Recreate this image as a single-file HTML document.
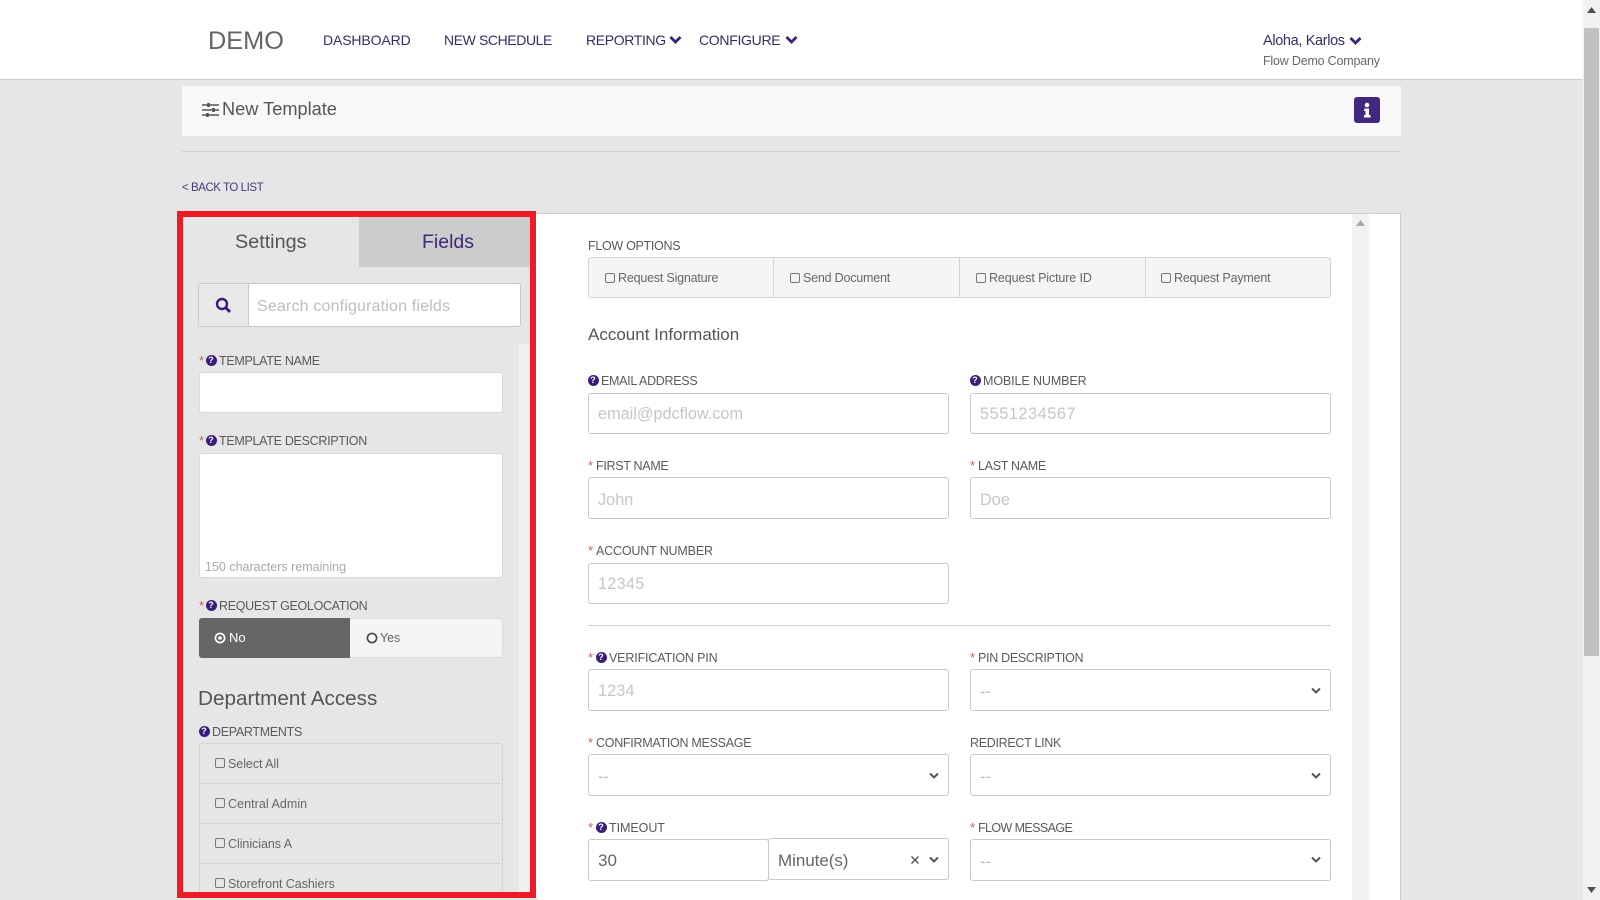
<!DOCTYPE html>
<html lang="en">
<head>
<meta charset="utf-8">
<title>New Template</title>
<style>
*{box-sizing:border-box}
html,body{margin:0;padding:0;width:1600px;height:900px;overflow:hidden;background:#e6e6e6;font-family:"Liberation Sans",sans-serif;color:#555}
.a{position:absolute}
.t{position:absolute;white-space:nowrap;line-height:16px;height:16px}
.lb{font-size:12.5px;letter-spacing:-.3px;color:#5a5a5a}
.nav{font-size:14px;color:#3b2a63}
.r{color:#c9605a;font-size:13px}
.q{position:absolute;width:11px;height:11px;margin-left:-.5px;margin-top:-1px;border-radius:50%;background:#3a1d78;color:#fff;font:bold 9px/11px "Liberation Sans",sans-serif;text-align:center}
.in{position:absolute;background:#fff;border:1px solid #c8c8c8;border-radius:3px}
.ph{position:absolute;white-space:nowrap;font-size:16.3px;line-height:20px;height:20px;color:#c6c6c6}
.cb{position:absolute;width:10px;height:10px;border:1px solid #777;border-radius:2px;background:transparent}
.ct{font-size:12.5px;color:#666;letter-spacing:-.05px}
.fo{letter-spacing:-.2px}
svg{position:absolute;display:block}
</style>
</head>
<body>

<!-- top nav -->
<div class="a" style="left:0;top:0;width:1583px;height:80px;background:#fff;border-bottom:1px solid #ccc"></div>
<div class="t" style="left:208px;top:26px;height:30px;line-height:30px;font-size:25.3px;color:#666">DEMO</div>
<div class="t nav" style="left:323px;top:32px;letter-spacing:-.12px">DASHBOARD</div>
<div class="t nav" style="left:444px;top:32px;letter-spacing:-.4px">NEW SCHEDULE</div>
<div class="t nav" style="left:586px;top:32px;letter-spacing:-.35px">REPORTING</div>
<svg style="left:669px;top:35px" width="13" height="10" viewBox="0 0 13 10"><path d="M1.5 2 L6.5 7 L11.5 2" fill="none" stroke="#3f2375" stroke-width="2.8"/></svg>
<div class="t nav" style="left:699px;top:32px;letter-spacing:-.3px">CONFIGURE</div>
<svg style="left:785px;top:35px" width="13" height="10" viewBox="0 0 13 10"><path d="M1.5 2 L6.5 7 L11.5 2" fill="none" stroke="#3f2375" stroke-width="2.8"/></svg>
<div class="t" style="left:1263px;top:33px;font-size:14.5px;color:#3b2a63;letter-spacing:-.35px">Aloha, Karlos</div>
<svg style="left:1349px;top:36px" width="13" height="10" viewBox="0 0 13 10"><path d="M1.5 2 L6.5 7 L11.5 2" fill="none" stroke="#3f2375" stroke-width="2.8"/></svg>
<div class="t" style="left:1263px;top:53px;font-size:12.5px;letter-spacing:-.2px;color:#666">Flow Demo Company</div>

<!-- page header -->
<div class="a" style="left:182px;top:86px;width:1219px;height:50px;background:#f8f8f8"></div>
<svg style="left:202px;top:102px" width="17" height="16" viewBox="0 0 17 16"><path d="M0 3h17M0 8h17M0 13h17" stroke="#555" stroke-width="1.6"/><rect x="5" y="1" width="3" height="4" rx="1" fill="#555"/><rect x="10" y="6" width="3" height="4" rx="1" fill="#555"/><rect x="4" y="11" width="3" height="4" rx="1" fill="#555"/></svg>
<div class="t" style="left:222px;top:98px;height:22px;line-height:22px;font-size:18.2px;color:#555">New Template</div>
<div class="a" style="left:1354px;top:97px;width:26px;height:26px;background:#43287f;border-radius:3px"></div>
<svg style="left:1354px;top:97px" width="26" height="26" viewBox="0 0 26 26"><circle cx="13" cy="8" r="2.3" fill="#fff"/><path d="M10.5 11.5h4.5v6.5h1.5v2.5h-6.5V18h1.5v-4h-1.5z" fill="#fff"/></svg>
<div class="a" style="left:182px;top:151px;width:1219px;height:1px;background:#d0d0d0"></div>
<div class="t" style="left:182px;top:180px;font-size:11.5px;color:#4a3a72;letter-spacing:-.45px">&lt; BACK TO LIST</div>

<!-- right panel -->
<div class="a" style="left:536px;top:213px;width:865px;height:687px;background:#fff;border:1px solid #ccc;border-left:0;border-bottom:0"></div>
<div class="a" style="left:1352px;top:214px;width:17px;height:686px;background:#f1f1f1"></div>
<svg style="left:1356px;top:220px" width="9" height="6" viewBox="0 0 9 6"><path d="M0 6L4.5 0L9 6z" fill="#a8a8a8"/></svg>

<div class="t lb" style="left:588px;top:238px">FLOW OPTIONS</div>
<div class="a" style="left:588px;top:257px;width:743px;height:41px;background:#f5f5f5;border:1px solid #d4d4d4;border-radius:3px"></div>
<div class="a" style="left:773px;top:257px;width:1px;height:41px;background:#d4d4d4"></div>
<div class="a" style="left:959px;top:257px;width:1px;height:41px;background:#d4d4d4"></div>
<div class="a" style="left:1145px;top:257px;width:1px;height:41px;background:#d4d4d4"></div>
<div class="cb" style="left:605px;top:273px"></div><div class="t ct fo" style="left:618px;top:270px">Request Signature</div>
<div class="cb" style="left:790px;top:273px"></div><div class="t ct fo" style="left:803px;top:270px">Send Document</div>
<div class="cb" style="left:976px;top:273px"></div><div class="t ct" style="left:989px;top:270px;letter-spacing:-.12px">Request Picture ID</div>
<div class="cb" style="left:1161px;top:273px"></div><div class="t ct fo" style="left:1174px;top:270px">Request Payment</div>

<div class="t" style="left:588px;top:325px;height:20px;line-height:20px;font-size:17px;color:#555">Account Information</div>

<div class="q" style="left:588px;top:376px">?</div>
<div class="t lb" style="left:601px;top:373px">EMAIL ADDRESS</div>
<div class="in" style="left:588px;top:393px;width:361px;height:41px"></div>
<div class="ph" style="left:598px;top:404px">email@pdcflow.com</div>
<div class="q" style="left:970px;top:376px">?</div>
<div class="t lb" style="left:983px;top:373px;letter-spacing:-.1px">MOBILE NUMBER</div>
<div class="in" style="left:970px;top:393px;width:361px;height:41px"></div>
<div class="ph" style="left:980px;top:404px;letter-spacing:.55px">5551234567</div>

<div class="t r" style="left:588px;top:458px">*</div>
<div class="t lb" style="left:596px;top:458px">FIRST NAME</div>
<div class="in" style="left:588px;top:477px;width:361px;height:42px"></div>
<div class="ph" style="left:598px;top:490px">John</div>
<div class="t r" style="left:970px;top:458px">*</div>
<div class="t lb" style="left:978px;top:458px">LAST NAME</div>
<div class="in" style="left:970px;top:477px;width:361px;height:42px"></div>
<div class="ph" style="left:980px;top:490px">Doe</div>

<div class="t r" style="left:588px;top:543px">*</div>
<div class="t lb" style="left:596px;top:543px;letter-spacing:-.17px">ACCOUNT NUMBER</div>
<div class="in" style="left:588px;top:563px;width:361px;height:41px"></div>
<div class="ph" style="left:598px;top:574px;letter-spacing:.25px">12345</div>

<div class="a" style="left:588px;top:625px;width:743px;height:1px;background:#d0d0d0"></div>

<div class="t r" style="left:588px;top:650px">*</div>
<div class="q" style="left:596px;top:653px">?</div>
<div class="t lb" style="left:609px;top:650px;letter-spacing:-.15px">VERIFICATION PIN</div>
<div class="in" style="left:588px;top:669px;width:361px;height:42px"></div>
<div class="ph" style="left:598px;top:681px;letter-spacing:.1px">1234</div>
<div class="t r" style="left:970px;top:650px">*</div>
<div class="t lb" style="left:978px;top:650px">PIN DESCRIPTION</div>
<div class="in" style="left:970px;top:669px;width:361px;height:42px"></div>
<div class="ph" style="left:980px;top:682px;color:#bbb">--</div>
<svg style="left:1310px;top:687px" width="12" height="8" viewBox="0 0 12 8"><path d="M2 1.5L6 5.5L10 1.5" fill="none" stroke="#555" stroke-width="2"/></svg>

<div class="t r" style="left:588px;top:735px">*</div>
<div class="t lb" style="left:596px;top:735px;letter-spacing:-.28px">CONFIRMATION MESSAGE</div>
<div class="in" style="left:588px;top:754px;width:361px;height:42px"></div>
<div class="ph" style="left:598px;top:767px;color:#bbb">--</div>
<svg style="left:928px;top:772px" width="12" height="8" viewBox="0 0 12 8"><path d="M2 1.5L6 5.5L10 1.5" fill="none" stroke="#555" stroke-width="2"/></svg>
<div class="t lb" style="left:970px;top:735px">REDIRECT LINK</div>
<div class="in" style="left:970px;top:754px;width:361px;height:42px"></div>
<div class="ph" style="left:980px;top:767px;color:#bbb">--</div>
<svg style="left:1310px;top:772px" width="12" height="8" viewBox="0 0 12 8"><path d="M2 1.5L6 5.5L10 1.5" fill="none" stroke="#555" stroke-width="2"/></svg>

<div class="t r" style="left:588px;top:820px">*</div>
<div class="q" style="left:596px;top:823px">?</div>
<div class="t lb" style="left:609px;top:820px;letter-spacing:-.05px">TIMEOUT</div>
<div class="in" style="left:588px;top:839px;width:181px;height:42px"></div>
<div class="ph" style="left:598px;top:851px;font-size:17px;color:#666">30</div>
<div class="in" style="left:768px;top:838px;width:181px;height:42px"></div>
<div class="ph" style="left:778px;top:851px;font-size:17px;letter-spacing:-.05px;color:#666">Minute(s)</div>
<svg style="left:910px;top:855px" width="10" height="10" viewBox="0 0 10 10"><path d="M1.5 1.5L8.5 8.5M8.5 1.5L1.5 8.5" stroke="#555" stroke-width="1.4"/></svg>
<svg style="left:928px;top:856px" width="12" height="8" viewBox="0 0 12 8"><path d="M2 1.5L6 5.5L10 1.5" fill="none" stroke="#555" stroke-width="2"/></svg>
<div class="t r" style="left:970px;top:820px">*</div>
<div class="t lb" style="left:978px;top:820px;letter-spacing:-.6px">FLOW MESSAGE</div>
<div class="in" style="left:970px;top:839px;width:361px;height:42px"></div>
<div class="ph" style="left:980px;top:852px;color:#bbb">--</div>
<svg style="left:1310px;top:856px" width="12" height="8" viewBox="0 0 12 8"><path d="M2 1.5L6 5.5L10 1.5" fill="none" stroke="#555" stroke-width="2"/></svg>

<!-- left panel -->
<div class="a" style="left:359px;top:217px;width:171px;height:50px;background:#ccc"></div>
<div class="t" style="left:235px;top:230px;height:24px;line-height:24px;font-size:19.8px;color:#555">Settings</div>
<div class="t" style="left:422px;top:230px;height:24px;line-height:24px;font-size:19.5px;color:#3f2a78">Fields</div>

<div class="a" style="left:198px;top:283px;width:323px;height:44px;background:#e8e8e8;border:1px solid #c8c8c8;border-radius:3px"></div>
<div class="a" style="left:248px;top:283px;width:273px;height:44px;background:#fff;border:1px solid #c8c8c8;border-radius:0 3px 3px 0"></div>
<svg style="left:215px;top:297px" width="17" height="17" viewBox="0 0 17 17"><circle cx="7" cy="7" r="5" fill="none" stroke="#3a1d78" stroke-width="2.4"/><path d="M10.8 10.8L15 15" stroke="#3a1d78" stroke-width="2.8"/></svg>
<div class="ph" style="left:257px;top:297px;font-size:16px;letter-spacing:.17px;color:#bdbdbd">Search configuration fields</div>

<div class="a" style="left:519px;top:344px;width:12px;height:549px;background:#f0f0f0"></div>

<div class="t r" style="left:199px;top:353px">*</div>
<div class="q" style="left:206px;top:356px">?</div>
<div class="t lb" style="left:219px;top:353px">TEMPLATE NAME</div>
<div class="a" style="left:199px;top:372px;width:304px;height:41px;background:#fff;border:1px solid #d8d8d8;border-radius:3px"></div>

<div class="t r" style="left:199px;top:433px">*</div>
<div class="q" style="left:206px;top:436px">?</div>
<div class="t lb" style="left:219px;top:433px">TEMPLATE DESCRIPTION</div>
<div class="a" style="left:199px;top:453px;width:304px;height:125px;background:#fff;border:1px solid #d8d8d8;border-radius:3px"></div>
<div class="t" style="left:205px;top:559px;font-size:12.5px;color:#aaa">150 characters remaining</div>

<div class="t r" style="left:199px;top:598px">*</div>
<div class="q" style="left:206px;top:601px">?</div>
<div class="t lb" style="left:219px;top:598px;letter-spacing:-.32px">REQUEST GEOLOCATION</div>
<div class="a" style="left:199px;top:618px;width:304px;height:40px;background:#f5f5f5;border-radius:3px;border:1px solid #ddd"></div>
<div class="a" style="left:199px;top:618px;width:151px;height:40px;background:#666;border-radius:3px 0 0 3px"></div>
<svg style="left:214px;top:632px" width="12" height="12" viewBox="0 0 12 12"><circle cx="6" cy="6" r="4.6" fill="none" stroke="#fff" stroke-width="1.6"/><circle cx="6" cy="6" r="1.8" fill="#fff"/></svg>
<div class="t" style="left:229px;top:630px;font-size:13px;color:#fff">No</div>
<svg style="left:366px;top:632px" width="12" height="12" viewBox="0 0 12 12"><circle cx="6" cy="6" r="4.6" fill="none" stroke="#444" stroke-width="1.6"/></svg>
<div class="t ct" style="left:380px;top:630px">Yes</div>

<div class="t" style="left:198px;top:686px;height:26px;line-height:26px;font-size:20.7px;color:#555">Department Access</div>

<div class="q" style="left:199px;top:727px">?</div>
<div class="t lb" style="left:212px;top:724px">DEPARTMENTS</div>
<div class="a" style="left:199px;top:743px;width:304px;height:150px;border:1px solid #d4d4d4;border-bottom:0;border-radius:3px 3px 0 0"></div>
<div class="a" style="left:199px;top:783px;width:304px;height:1px;background:#d4d4d4"></div>
<div class="a" style="left:199px;top:823px;width:304px;height:1px;background:#d4d4d4"></div>
<div class="a" style="left:199px;top:863px;width:304px;height:1px;background:#d4d4d4"></div>
<div class="cb" style="left:215px;top:758px"></div><div class="t ct" style="left:228px;top:756px">Select All</div>
<div class="cb" style="left:215px;top:798px"></div><div class="t ct" style="left:228px;top:796px;letter-spacing:.05px">Central Admin</div>
<div class="cb" style="left:215px;top:838px"></div><div class="t ct" style="left:228px;top:836px">Clinicians A</div>
<div class="cb" style="left:215px;top:878px"></div><div class="t ct" style="left:228px;top:876px">Storefront Cashiers</div>

<!-- red highlight frame -->
<div class="a" style="left:177px;top:211px;width:359px;height:687px;border:6px solid #ed1c24"></div>
<div class="a" style="left:176px;top:898px;width:362px;height:2px;background:#e6e6e6"></div>

<!-- page scrollbar -->
<div class="a" style="left:1583px;top:0;width:17px;height:900px;background:#f1f1f1"></div>
<div class="a" style="left:1584px;top:28px;width:15px;height:628px;background:#c1c1c1"></div>
<svg style="left:1587px;top:7px" width="9" height="6" viewBox="0 0 9 6"><path d="M0 6L4.5 0L9 6z" fill="#505050"/></svg>
<svg style="left:1587px;top:887px" width="9" height="6" viewBox="0 0 9 6"><path d="M0 0L4.5 6L9 0z" fill="#505050"/></svg>

</body>
</html>
